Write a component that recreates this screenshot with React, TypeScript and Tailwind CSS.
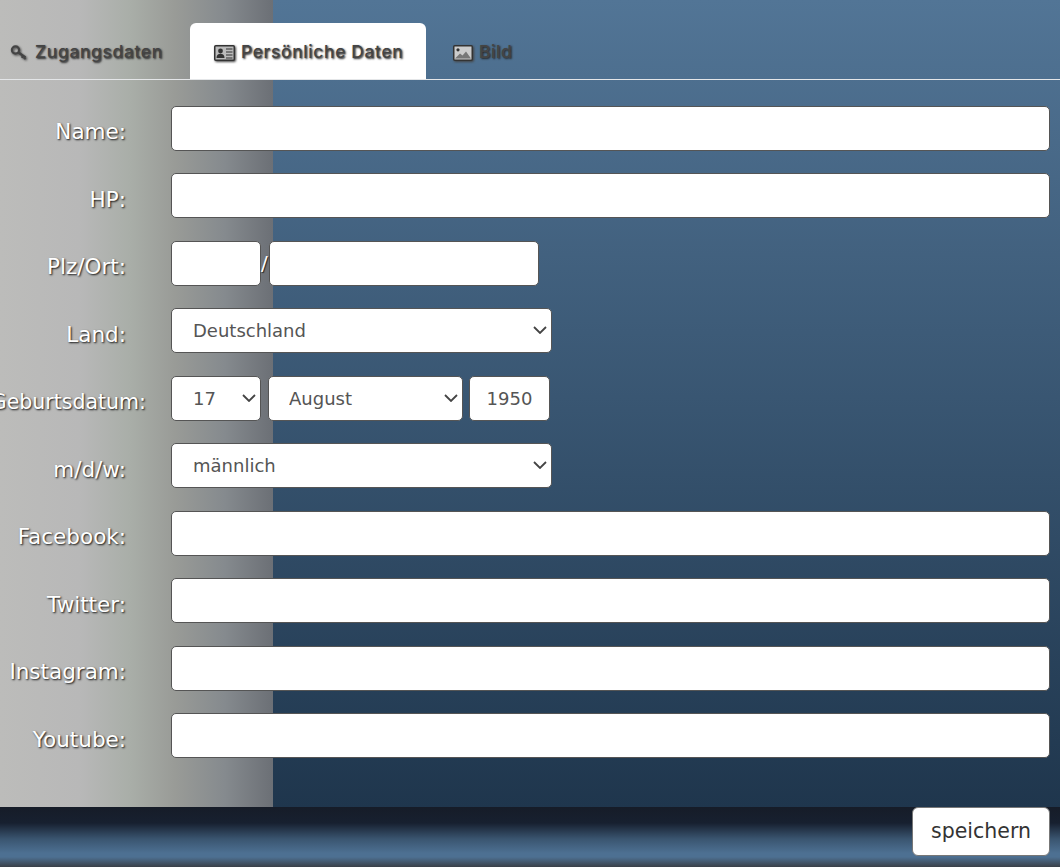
import type { ReactNode } from 'react';

const fieldClass =
  'h-[45px] rounded-[5px] border border-[#555] bg-white text-[18px] text-[#555] outline-none';

const iconClass = 'shrink-0 [filter:drop-shadow(1px_1px_1px_#444)]';

function KeyIcon() {
  return (
    <svg width="20" height="20" viewBox="0 0 20 20" className={iconClass} fill="none" stroke="#444" strokeWidth="2.2">
      <circle cx="6.5" cy="7" r="3.6" />
      <path d="M9.5 9.5l7 5M14 12.8l-1.2 2M16.3 14.4l-1.1 1.8" />
    </svg>
  );
}

function CardIcon() {
  return (
    <svg width="21" height="18" viewBox="0 0 21 18" className={iconClass}>
      <rect x="0.75" y="1.75" width="19.5" height="14.5" rx="1" fill="#bbb" stroke="#333" strokeWidth="1.5" />
      <circle cx="6.5" cy="7" r="2.4" fill="#333" />
      <path d="M2.5 14c0-3 1.6-4.2 4-4.2s4 1.2 4 4.2z" fill="#333" />
      <path d="M12 5h6.5M12 8h6.5M12 11h6.5M12 14h6.5" stroke="#333" strokeWidth="1.2" />
    </svg>
  );
}

function ImageIcon() {
  return (
    <svg width="20" height="16" viewBox="0 0 20 16" className={iconClass}>
      <rect x="0.75" y="0.75" width="18.5" height="14.5" rx="1" fill="#ccc" stroke="#333" strokeWidth="1.5" />
      <circle cx="5" cy="4.8" r="1.6" fill="#333" />
      <path d="M2 13.5l5-5 2.5 2 3.5-4 5 7z" fill="#777" />
    </svg>
  );
}

function Tab({ icon, label, active, className }: { icon: ReactNode; label: string; active?: boolean; className?: string }) {
  return (
    <div
      className={`flex h-[56px] items-center gap-[6px] rounded-t-[6px] pt-[3px] text-[17.5px] font-medium tracking-[0.6px] text-[#444] [text-shadow:1px_1px_2px_#222] ${
        active ? 'bg-white' : ''
      } ${className ?? ''}`}
    >
      {icon}
      <span>{label}</span>
    </div>
  );
}

function Row({ label, wide, children }: { label: string; wide?: boolean; children: ReactNode }) {
  return (
    <div className="flex h-[45px] items-center">
      <div
        className={`flex h-full w-[171px] shrink-0 items-center justify-end pt-[8px] whitespace-nowrap text-white [text-shadow:1px_1px_2px_#111] ${
          wide ? 'pr-[25px] text-[20.5px]' : 'pr-[45px] text-[21.5px]'
        }`}
      >
        {label}
      </div>
      {children}
    </div>
  );
}

function TextRow({ label }: { label: string }) {
  return (
    <Row label={label}>
      <input className={`${fieldClass} w-[879px]`} />
    </Row>
  );
}

function Select({ value, className, textClass }: { value: string; className: string; textClass: string }) {
  return (
    <div className={`relative ${className}`}>
      <select className={`${fieldClass} w-full appearance-none ${textClass}`} defaultValue={value}>
        <option>{value}</option>
      </select>
      <svg
        width="14"
        height="8"
        viewBox="0 0 14 8"
        fill="none"
        stroke="#444"
        strokeWidth="1.8"
        className="pointer-events-none absolute top-[18px] right-[5px]"
      >
        <path d="M1 1l6 6 6-6" />
      </svg>
    </div>
  );
}

export default function App() {
  return (
    <div
      className="flex h-[867px] w-[1060px] flex-col overflow-hidden bg-[linear-gradient(90deg,#bcbcba_0px,#b8b8b8_80px,#a9aea8_130px,#999b97_175px,#858a8e_225px,#6c7076_272px),linear-gradient(180deg,#527596_0px,#1f364d_807px)] bg-[size:273px_100%,100%_100%] bg-no-repeat [font-family:'DejaVu_Sans',sans-serif]"
    >
      <div className="flex h-[80px] shrink-0 items-end gap-[3px] border-b border-[#e4e6e8] font-['Inter',sans-serif]">
        <Tab icon={<KeyIcon />} label="Zugangsdaten" className="w-[187px] pl-[9px]" />
        <Tab icon={<CardIcon />} label="Persönliche Daten" active className="w-[236px] pl-[24px]" />
        <Tab icon={<ImageIcon />} label="Bild" className="pl-[24px]" />
      </div>

      <div className="flex flex-1 flex-col gap-[22.5px] pt-[25.75px]">
        <TextRow label="Name:" />
        <TextRow label="HP:" />
        <Row label="Plz/Ort:">
          <input className={`${fieldClass} w-[90px]`} />
          <span className="w-[8px] text-[20px] text-white [text-shadow:1px_1px_1px_#222]">/</span>
          <input className={`${fieldClass} w-[270px]`} />
        </Row>
        <Row label="Land:">
          <Select value="Deutschland" className="w-[381px]" textClass="pl-[21px]" />
        </Row>
        <Row label="Geburtsdatum:" wide>
          <div className="flex gap-[6px]">
            <Select value="17" className="mr-[1px] w-[90px]" textClass="pl-[21px]" />
            <Select value="August" className="w-[195px]" textClass="pl-[20px]" />
            <input className={`${fieldClass} w-[81px] text-center`} defaultValue="1950" />
          </div>
        </Row>
        <Row label="m/d/w:">
          <Select value="männlich" className="w-[381px]" textClass="pl-[21px]" />
        </Row>
        <TextRow label="Facebook:" />
        <TextRow label="Twitter:" />
        <TextRow label="Instagram:" />
        <TextRow label="Youtube:" />
      </div>

      <div className="flex h-[60px] shrink-0 items-start justify-end bg-[linear-gradient(180deg,#161c28_0px,#172030_16px,#3a5570_32px,#4d7092_46px,#4d7092_50px,#3a4048_60px)] pr-[10px]">
        <button className="h-[49px] w-[138px] rounded-[6px] border border-[#777] bg-white text-[20.5px] text-[#333]">
          speichern
        </button>
      </div>
    </div>
  );
}
